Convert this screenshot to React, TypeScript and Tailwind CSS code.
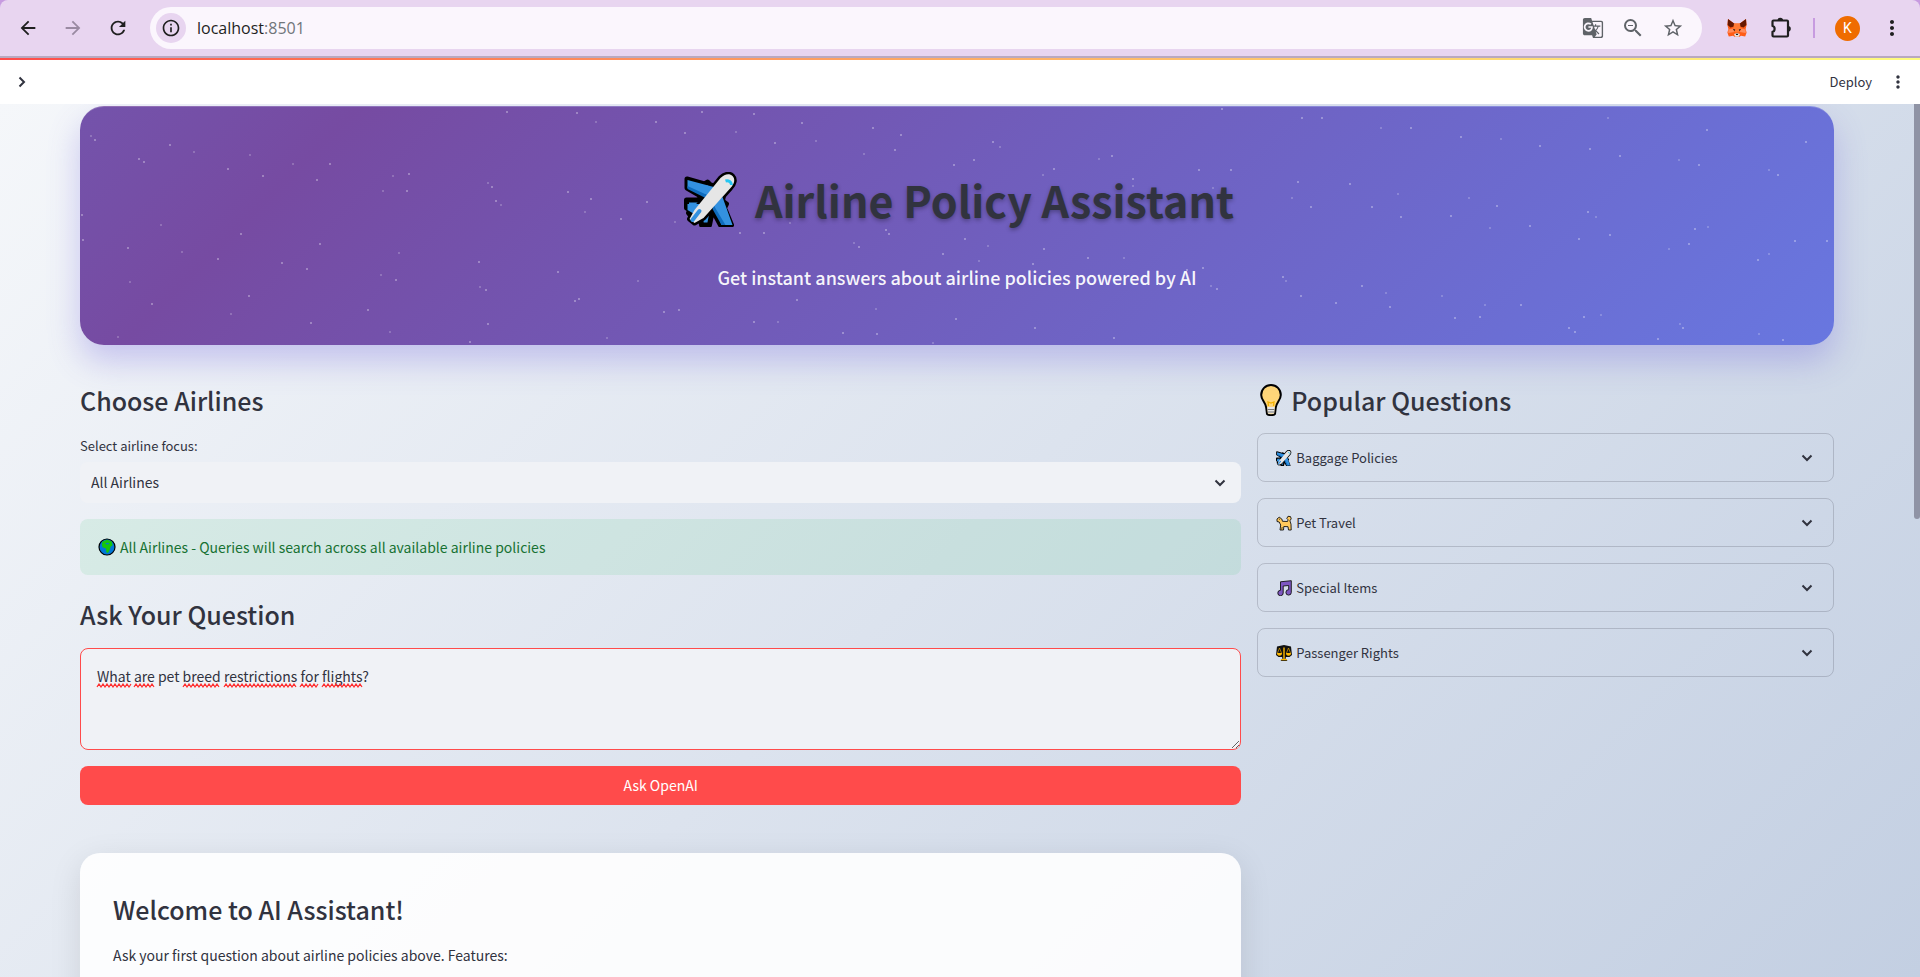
import { useState } from "react";
import {
  MdArrowBack,
  MdArrowForward,
  MdRefresh,
  MdInfoOutline,
  MdStarOutline,
  MdZoomOut,
  MdGTranslate,
  MdMoreVert,
} from "react-icons/md";

type IconProps = { className?: string };

function Chevron({ className }: IconProps) {
  return (
    <svg viewBox="0 0 12 12" className={className} fill="none" stroke="currentColor" strokeWidth="2" aria-hidden="true">
      <path d="M1.5 3.5 6 8l4.5-4.5" />
    </svg>
  );
}

function Puzzle({ className }: IconProps) {
  return (
    <svg viewBox="0 0 24 24" className={className} aria-hidden="true">
      <path
        d="M4.500 4.500h13.500a1 1 0 0 1 1 1v14a1 1 0 0 1-1 1H4.500a1 1 0 0 1-1-1v-3.700c2.600-.3 3-5.300 0-5.800V5.500a1 1 0 0 1 1-1z"
        fill="none"
        stroke="currentColor"
        strokeWidth="2.200"
        strokeLinejoin="round"
      />
      <path d="M8.500 4.500a2.800 2.800 0 0 1 5.600 0zM19 10a2.800 2.800 0 0 1 0 5.600z" fill="currentColor" />
    </svg>
  );
}

function Plane({ className }: IconProps) {
  return (
    <svg viewBox="0 0 54 55" className={className} aria-hidden="true">
      <g stroke="#000" strokeWidth="5" strokeLinejoin="round">
        <path d="M2.500 7 20 12l3-2 3 3 14 4-2 12 4 3-2 4 7 17H36l-8-15-3 15h-8l-1-8-8 1-4-5 1-3-3-2v-8h11l5-3L2.500 16z" fill="#3391e0" />
        <path d="M36 6c4-4 9-5 12-2s2 8-2 12L19 46l-9 5-5-4 5-9z" fill="#e6e6e6" />
      </g>
      <path d="M3 8 33 16l-6 9L3 16zM3 32h12l5 3-6 9-6-3-5-3zM29 33l9-8 10 28H37z" fill="#3391e0" />
      <path d="m3 14 24 11-2 3L3 17zM29 33l12 20h-4l-9-16z" fill="#0f6cbd" />
      <path d="M36 6c4-4 9-5 12-2s2 8-2 12L19 46l-9 5-5-4 5-9z" fill="#e6e6e6" />
      <path d="M41 9c3-1 6 1 6 4" fill="none" stroke="#26c6f2" strokeWidth="3" />
      <path d="m8 48 7-9" stroke="#3391e0" strokeWidth="4" strokeLinecap="round" />
    </svg>
  );
}

function Bulb({ className }: IconProps) {
  return (
    <svg viewBox="0 0 22 32" className={className} aria-hidden="true">
      <path d="M11 1C5.500 1 1.200 5.300 1.200 11c0 5 4.300 7 5 12.500l.8 6.500c1 1.500 7 1.500 8 0l.8-6.500c.7-5.500 5-7.500 5-12.500C20.800 5.300 16.500 1 11 1z" fill="#ffd679" stroke="#000" strokeWidth="2" />
      <path d="M7.300 23h7.400l-.6 6.500H7.900z" fill="#e6e6e6" />
      <path d="M7.500 25.500h7M7.800 28h6.400" stroke="#777" />
      <path d="M8.500 22 8 18l3 1 3-1-.5 4" fill="none" stroke="#f2b100" strokeWidth="1.300" />
    </svg>
  );
}

function Globe({ className }: IconProps) {
  return (
    <svg viewBox="0 0 18 18" className={className} aria-hidden="true">
      <circle cx="9" cy="9" r="8" fill="#0078d7" stroke="#000" strokeWidth="1.200" />
      <path d="M4.500 3.500 9 1.800l4.500 1.400 1.200 4-2 1.300-.8 3-2 3.500-1.600-.8-.3-3.700L4.500 9.200 3.800 6.500z" fill="#16c60c" />
      <path d="m7 5.500 3-.8 1.500 1.300-2.500.5z" fill="#0078d7" />
    </svg>
  );
}

function Poodle({ className }: IconProps) {
  return (
    <svg viewBox="0 0 16 16" className={className} aria-hidden="true">
      <path d="M1 4 3.200 2.200 5.800 4l.7 2.300 5 .2.600-1.700-1.300-1.300L12 1.300l2.500.3.700 2.200-1.300 2 1.100 3.400.2 5.800h-2.700l-.5-3.300L7.800 11.500l-.3 3.500H4l.7-5-1.500-3L1 6.500z" fill="#ffc85c" stroke="#111" strokeWidth=".9" strokeLinejoin="round" />
      <path d="M3 4.200h1M5.700 14.500l.5-2.500" stroke="#111" strokeWidth=".7" />
    </svg>
  );
}

function Notes({ className }: IconProps) {
  return (
    <svg viewBox="0 0 16 16" className={className} aria-hidden="true">
      <path d="M4.500 1.800 15.300.7v11.800a2.700 2.700 0 1 1-2.600-2.800V5.500L7.200 6v7a2.700 2.700 0 1 1-2.700-2.700z" fill="#7e57c2" stroke="#111" strokeWidth=".9" strokeLinejoin="round" />
    </svg>
  );
}

function Scales({ className }: IconProps) {
  return (
    <svg viewBox="0 0 16 16" className={className} aria-hidden="true">
      <path d="M8 0 15 1.500 16 10l-2.500 2H10l-.5 1.500 2 2.500h-7l2-2.500L6 12H2.500L0 10l1-8.500z" fill="#111" />
      <path d="M1 8h5a2.500 2.700 0 0 1-5 0zM10 8h5a2.500 2.700 0 0 1-5 0zM7.300 2.500h1.400V14H7.300zM5 14h6v1.300H5z" fill="#ffb900" />
      <path d="m1.500 8 2-5 2 5M10.500 8l2-5 2 5" fill="none" stroke="#ffb900" strokeWidth=".6" />
    </svg>
  );
}

function Fox({ className }: IconProps) {
  return (
    <svg viewBox="0 0 20 19" className={className} aria-hidden="true">
      <path d="M1 .5 7 5h6l6-4.500.6 6-1 4 1 3.500-1.400 4-4.200-.8-2 1.300H8l-2-1.300-4.200.8L.4 14l1-3.500-1-4z" fill="#ff5c16" />
      <path d="M1 .5 7.500 5.200 7 8 3.500 9 .6 6.500zM19 .5l-6.500 4.700L13 8l3.500 1 2.900-2.500z" fill="#661800" />
      <path d="M7 5h6l.7 5L12 14H8l-1.700-4z" fill="#ff7a33" />
      <path d="m1.400 11 4.400-1 1.400 3.500-6 1zM18.600 11l-4.400-1-1.400 3.500 6 1z" fill="#ff8d5d" />
      <path d="m7 15.500 3-1 3 1-1.200 2.700H8.200z" fill="#e9e1dc" />
      <path d="m5.800 10.500 2.400.6-.5 1.400zM14.200 10.500l-2.400.6.500 1.400zM8.700 15.200h2.600l-.5 1.200H9.200z" fill="#161616" />
    </svg>
  );
}

const stars: [number, number][] = [
  [11, 29], [15, 33], [90, 38], [114, 45], [59, 52], [64, 55], [170, 48], [148, 62], [183, 69], [213, 57], [250, 57],
  [237, 73], [313, 69], [329, 67], [327, 84], [303, 84], [427, 5], [497, 6], [516, 15], [576, 15], [605, 26],
  [408, 76], [412, 80], [416, 94], [421, 98], [488, 85], [511, 92], [505, 105], [567, 95], [541, 112], [595, 115],
  [2, 108], [3, 133], [81, 118], [161, 127], [48, 141], [102, 145], [138, 152], [240, 137], [319, 146], [202, 156],
  [227, 162], [301, 168], [316, 173], [399, 155], [400, 180], [406, 183], [478, 165], [558, 174], [495, 194],
  [499, 192], [50, 175], [169, 189], [72, 197], [151, 207], [231, 216], [288, 203], [310, 225], [408, 217],
  [390, 235], [38, 230], [584, 205], [599, 203], [527, 231], [622, 5], [674, 7], [656, 25], [722, 16], [695, 36],
  [736, 34], [793, 21], [821, 28], [784, 47], [815, 43], [913, 35], [920, 40], [874, 58], [894, 53], [1019, 52],
  [1032, 49], [974, 62], [963, 68], [1119, 63], [1053, 72], [1053, 79], [660, 126], [684, 126], [710, 116],
  [806, 123], [809, 127], [774, 136], [779, 140], [885, 132], [908, 139], [863, 147], [964, 142], [899, 154],
  [953, 157], [1008, 151], [1044, 151], [1107, 163], [1123, 161], [1131, 179], [1137, 182], [717, 193], [796, 202],
  [876, 212], [674, 215], [698, 215], [763, 226], [797, 227], [853, 236], [955, 221], [1034, 231], [1019, 168],
  [1142, 2], [1151, 63], [1133, 81], [1222, 11], [1242, 11], [1301, 21], [1331, 21], [1381, 30], [1421, 32],
  [1460, 39], [1510, 42], [1528, 11], [1540, 49], [1627, 23], [1599, 53], [1619, 58], [1726, 35], [1689, 63],
  [1698, 68], [1218, 75], [1212, 91], [1231, 100], [1270, 77], [1318, 87], [1292, 100], [1321, 110], [1389, 91],
  [1417, 99], [1371, 109], [1410, 121], [1450, 119], [1508, 105], [1516, 110], [1530, 128], [1499, 132],
  [1628, 120], [1615, 122], [1609, 137], [1589, 142], [1715, 134], [1747, 134], [1689, 147], [1678, 153],
  [1203, 170], [1206, 174], [1282, 179], [1221, 189], [1306, 186], [1256, 196], [1310, 200], [1362, 189],
  [1375, 211], [1400, 210], [1405, 198], [1441, 198], [1504, 210], [1521, 208], [1489, 221], [1495, 225],
  [1600, 217], [1603, 221], [1578, 232], [1679, 227], [1703, 233],
];

function Stars() {
  return (
    <svg className="pointer-events-none absolute inset-0 h-full w-full" aria-hidden="true">
      {stars.map(([x, y], i) => (
        <rect key={i} x={x - 1} y={y - 1} width="2" height="2" fill="#fff" fillOpacity={i % 3 === 0 ? 0.2 : 0.3} />
      ))}
    </svg>
  );
}

const squiggles: [number, number][] = [[17, 51], [54, 75], [103, 140], [144, 217], [220, 239], [242, 283]];

function wave(from: number, to: number) {
  let d = `M${from} 4`;
  for (let x = from, up = true; x < to - 1; x += 2, up = !up) d += `l2 ${up ? -3 : 3}`;
  return d;
}

const topics = [
  { label: "Baggage Policies", Icon: Plane },
  { label: "Pet Travel", Icon: Poodle },
  { label: "Special Items", Icon: Notes },
  { label: "Passenger Rights", Icon: Scales },
];

function BrowserBar() {
  return (
    <div className="shrink-0 bg-[#c79be0]">
      <div className="flex h-14 items-center rounded-t-lg bg-[#e8d5f0] px-4 text-[#1f1f1f]">
        <div className="flex items-center gap-[21px] pr-5">
          <button aria-label="Back" className="flex size-6 items-center justify-center"><MdArrowBack className="size-[22px]" /></button>
          <button aria-label="Forward" className="flex size-6 items-center justify-center text-[#9a8aa2]"><MdArrowForward className="size-[22px]" /></button>
          <button aria-label="Reload" className="flex size-6 items-center justify-center"><MdRefresh className="size-[22px]" /></button>
        </div>
        <div className="flex h-[42px] flex-1 items-center rounded-full bg-[#fbf6fd] pr-[17px] pl-[6px]">
          <button aria-label="Site information" className="flex size-[30px] items-center justify-center rounded-full bg-[#e8d5f0]">
            <MdInfoOutline className="size-5" />
          </button>
          <div className="flex-1 pl-[11px] font-['Open_Sans',sans-serif] text-base text-[#1f1f1f]">
            localhost<span className="text-[#70757a]">:8501</span>
          </div>
          <div className="flex items-center gap-4 text-[#5f6368]">
            <button aria-label="Translate" className="flex size-6 items-center justify-center"><MdGTranslate className="size-[22px]" /></button>
            <button aria-label="Zoom" className="flex size-6 items-center justify-center"><MdZoomOut className="size-6" /></button>
            <button aria-label="Bookmark" className="flex size-6 items-center justify-center"><MdStarOutline className="size-[22px]" /></button>
          </div>
        </div>
        <div className="flex items-center gap-5 pl-[23px]">
          <button aria-label="Wallet" className="flex size-6 items-center justify-center"><Fox className="size-5" /></button>
          <button aria-label="Extensions"><Puzzle className="size-6" /></button>
          <span className="h-5 w-[2px] bg-[#c79be0]" />
          <button aria-label="Profile" className="flex size-[25px] items-center justify-center rounded-full bg-[#ef6c00] font-['Roboto',sans-serif] text-sm text-white">K</button>
          <button aria-label="Menu"><MdMoreVert className="size-6" /></button>
        </div>
      </div>
      <div className="h-[2px] bg-[#b9a9c0]" />
    </div>
  );
}

export default function App() {
  const [question, setQuestion] = useState("What are pet breed restrictions for flights?");
  return (
    <div className="flex h-screen flex-col overflow-hidden font-['Noto_Sans_CJK_SC',sans-serif] text-[#31333f]">
      <BrowserBar />
      <header className="shrink-0 bg-white">
        <div className="h-[2px] bg-gradient-to-r from-[#ff4b4b] to-[#fffd80]" />
        <div className="flex h-11 items-center justify-between pr-3 pl-4">
          <button aria-label="Open sidebar"><Chevron className="size-3 -rotate-90" /></button>
          <div className="flex items-center gap-4">
            <button className="text-[13px]">Deploy</button>
            <button aria-label="Options"><MdMoreVert className="size-5" /></button>
          </div>
        </div>
      </header>
      <div className="relative min-h-0 flex-1 bg-[linear-gradient(135deg,#f5f7fa_0%,#c3cfe2_100%)]">
        <main className="h-full overflow-y-auto pt-[2px] pr-[86px] pl-20 [scrollbar-width:none]">
          <section className="relative flex h-[239px] flex-col items-center rounded-3xl border-t border-white/20 bg-[linear-gradient(135deg,#7453ab_0%,#764ba2_14%,#667eea_114%)] pt-[52px] shadow-[0_16px_32px_rgba(102,90,220,0.3)]">
            <Stars />
            <h1 className="relative flex items-center gap-4 pl-1 text-[43px] leading-[80px] font-bold [text-shadow:0_2px_4px_rgba(0,0,0,0.3)]">
              <Plane className="size-[55px]" />
              Airline Policy Assistant
            </h1>
            <p className="relative mt-[22px] text-[18px] leading-8 font-medium text-white/95">
              Get instant answers about airline policies powered by AI
            </p>
          </section>

          <div className="mt-8 flex gap-4">
            <div className="min-w-0 flex-[1_1_calc(66.66%-16px)]">
              <h2 className="pt-[7px] pb-[10px] text-[25px] leading-8 font-medium">Choose Airlines</h2>
              <label htmlFor="airline" className="mt-2 block text-[13px] leading-6">Select airline focus:</label>
              <div className="relative mt-1">
                <select id="airline" className="h-[41px] w-full appearance-none rounded-lg bg-[#f0f2f6] px-[11px] text-[14px]">
                  <option>All Airlines</option>
                </select>
                <Chevron className="pointer-events-none absolute top-[15px] right-[15px] size-3" />
              </div>
              <div className="mt-4 flex h-14 items-center gap-1 rounded-lg bg-[#21c354]/10 px-[18px] text-[14px] text-[#177233]">
                <Globe className="size-[18px]" />
                <span>All Airlines - Queries will search across all available airline policies</span>
              </div>
              <h2 className="mt-4 pt-[7px] pb-[10px] text-[25px] leading-8 font-medium"><label htmlFor="question">Ask Your Question</label></h2>
              <div className="relative mt-2 flex">
                <textarea
                  id="question"
                  value={question}
                  onChange={(e) => setQuestion(e.target.value)}
                  spellCheck={false}
                  className="h-[102px] w-full resize-y rounded-lg border border-[#ff4b4b] bg-[#f0f2f6] px-4 pt-[15px] pb-4 text-[14px] leading-6 outline-none"
                />
                <svg className="pointer-events-none absolute top-[35px] left-0 h-[5px] w-[300px]" fill="none" stroke="#ff2a2a" strokeWidth="1.200" aria-hidden="true">
                  {squiggles.map(([a, b]) => <path key={a} d={wave(a, b)} />)}
                </svg>
              </div>
              <button className="mt-4 h-[39px] w-full rounded-lg bg-[#ff4b4b] text-[14px] text-white">Ask OpenAI</button>
              <section className="mt-12 rounded-[20px] bg-white/90 px-[33px] pt-8 pb-40 shadow-[0_8px_32px_rgba(0,0,0,0.1)]">
                <h2 className="pt-2 pb-[9px] text-[25px] leading-8 font-medium">Welcome to AI Assistant!</h2>
                <p className="mt-[9px] text-[14px] leading-6">Ask your first question about airline policies above. Features:</p>
              </section>
            </div>
            <aside className="min-w-0 flex-[1_1_calc(33.33%-16px)]">
              <h2 className="flex items-center gap-[6px] pt-[7px] pb-[10px] text-[25px] leading-8 font-medium">
                <Bulb className="h-8 w-[28px]" />
                Popular Questions
              </h2>
              <div className="mt-[7px] flex flex-col gap-4">
                {topics.map(({ label, Icon }) => (
                  <button key={label} className="flex h-[49px] items-center rounded-lg border border-[#31333f]/20 pr-5 pl-[18px] text-[13px]">
                    <Icon className="size-4" />
                    <span className="ml-1 flex-1 text-left">{label}</span>
                    <Chevron className="size-3" />
                  </button>
                ))}
              </div>
            </aside>
          </div>
        </main>
        <div className="absolute top-0 right-0 h-[415px] w-[6px] rounded-b-full bg-[#8f93a5]" />
      </div>
    </div>
  );
}
